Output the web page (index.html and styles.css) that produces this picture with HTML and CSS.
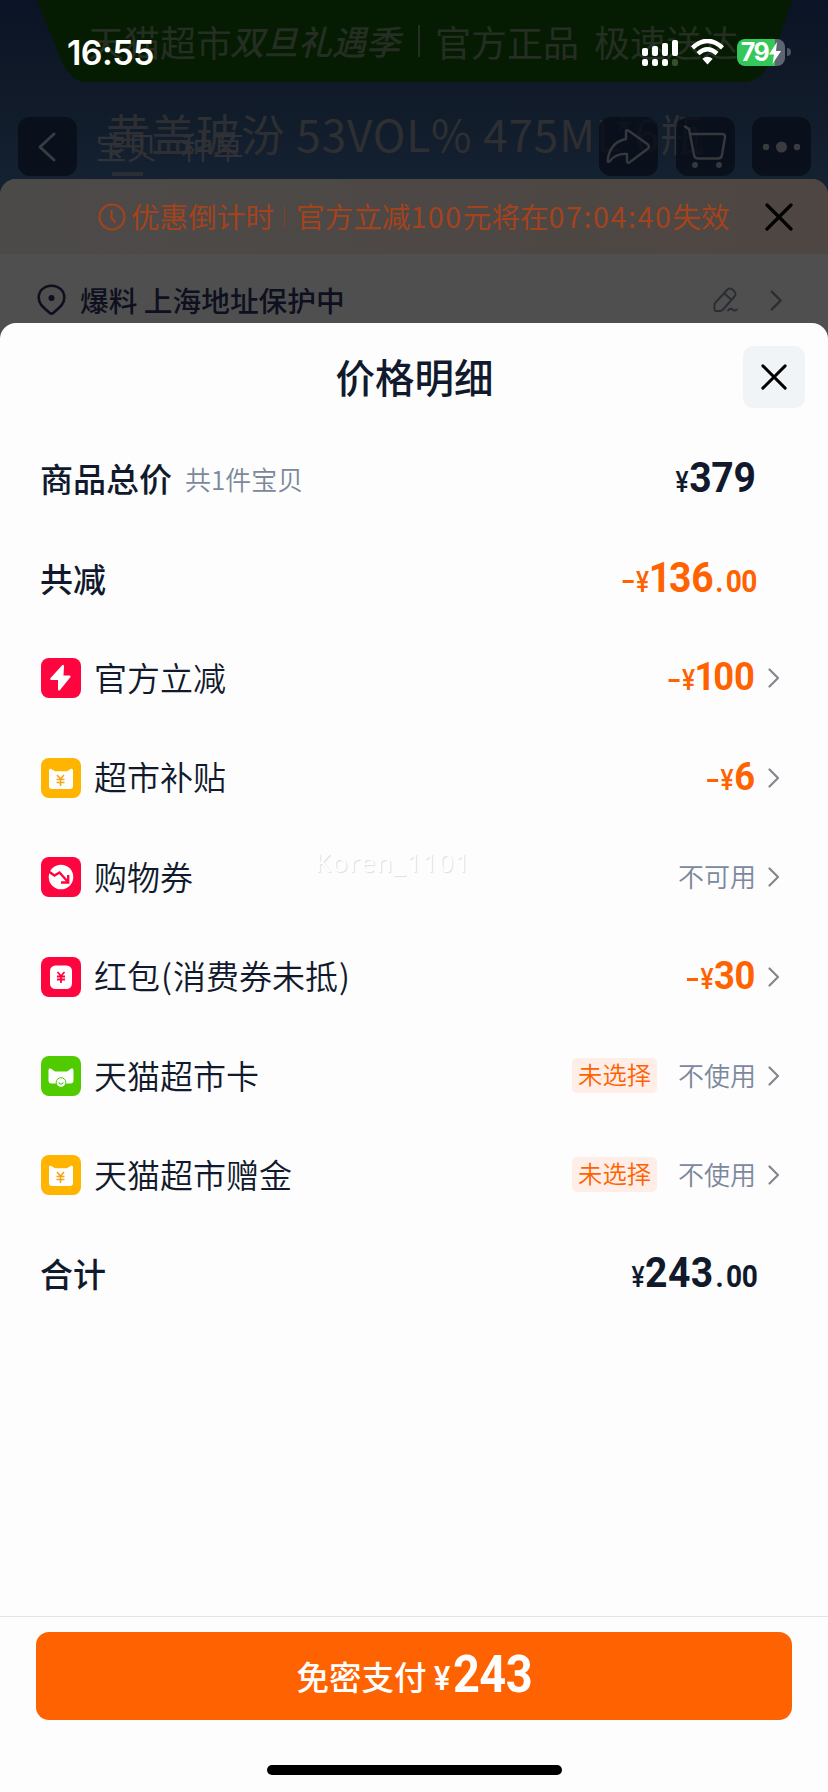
FILE: index.html
```html
<!DOCTYPE html>
<html lang="zh-CN">
<head>
<meta charset="utf-8">
<title>价格明细</title>
<link rel="stylesheet" href="styles.css">
</head>
<body>
<svg class="defs" width="0" height="0">
  <defs>
    <symbol id="chevron" viewBox="0 0 12 20"><path d="M1.5 1.5 10 10 1.5 18.500" fill="none" stroke="currentColor" stroke-width="2.200" stroke-linecap="round" stroke-linejoin="round"/></symbol>
    <symbol id="close" viewBox="0 0 28 28"><path d="M2 2 26 26M26 2 2 26" fill="none" stroke="currentColor" stroke-width="3.200" stroke-linecap="round"/></symbol>
    <symbol id="cat-yuan" viewBox="0 0 40 40">
      <rect width="40" height="40" rx="8" fill="#ffb400"/>
      <path d="M8 12.500Q8 10.200 10 10.800L14 13.200H26L30 10.800Q32 10.200 32 12.500V28Q32 31 29 31H11Q8 31 8 28Z" fill="#fff"/>
      <path d="M16 17l3.500 4 3.500-4M15.500 21.500h8M15.500 24.500h8M19.500 21v7" fill="none" stroke="#f5a51a" stroke-width="1.600"/>
    </symbol>
  </defs>
</svg>
<div class="page">
  <header class="hero">
    <div class="promo">
      <svg class="promo-shape" width="828" height="84" viewBox="0 0 828 84"><path d="M37 0H792L772 58Q763 82 742 82H86Q72 82 62 62Z" fill="#061c02"/></svg>
      <div class="promo-text"><span>天猫超市</span><em>双旦礼遇季</em><i class="promo-bar"></i><span>官方正品</span><span class="promo-last">极速送达</span></div>
    </div>
    <div class="product-title">黄盖玻汾 53VOL% 475ML*6瓶</div>
    <div class="title-next"></div>
    <nav class="nav">
      <span class="nav-btn"><svg width="59" height="59" viewBox="0 0 59 59"><path d="M36 17 22 30 36 43" fill="none" stroke="#393b3f" stroke-width="3"  stroke-linecap="round" stroke-linejoin="round"/></svg></span>
      <span class="nav-tabs"><b>宝贝</b><b>种草</b></span>
      <span class="nav-btn"><svg width="59" height="59" viewBox="0 0 59 59"><path d="M27 14.500Q27 12 30 14L49 27.500Q51 29.500 49 31.500L31 45Q28.500 47 28 44V37Q17 36 11 44Q8 47 9 41Q12 25 27 22Z" fill="none" stroke="#36383c" stroke-width="2.400" stroke-linejoin="round"/></svg></span>
      <span class="nav-btn"><svg width="59" height="59" viewBox="0 0 59 59"><path d="M9 9.500l4 2.500 5 26q.6 3.500 4 3.500h20q3.500 0 4-3.500l3-18q.5-3-3-3H15" fill="none" stroke="#36383c" stroke-width="2.400" stroke-linecap="round" stroke-linejoin="round"/><circle cx="19" cy="48" r="3" fill="#36383c"/><circle cx="43" cy="48" r="3" fill="#36383c"/></svg></span>
      <span class="nav-btn"><svg width="59" height="59" viewBox="0 0 59 59" fill="#393b3f"><circle cx="14" cy="30" r="3.200"/><circle cx="29.500" cy="30" r="5.500"/><circle cx="45" cy="30" r="3.200"/></svg></span>
    </nav>
    <div class="status">
      <span class="time">16:55</span>
      <svg class="signal" width="37" height="27" viewBox="0 0 37 27" fill="#fff"><rect x="0" y="8" width="6" height="8" rx="2"/><rect x="10" y="6" width="6" height="10" rx="2"/><rect x="20" y="3" width="6" height="13" rx="2"/><rect x="30" y="0" width="6" height="16" rx="2"/><rect x="0" y="19" width="6" height="7" rx="2.200"/><rect x="10" y="19" width="6" height="7" rx="2.200"/><rect x="20" y="19" width="6" height="7" rx="2.200"/><rect x="30" y="19" width="6" height="7" rx="2.200" fill="#34502f"/></svg>
      <svg class="wifi" width="35" height="26" viewBox="0 0 35 26"><path d="M2.500 8.800Q17.500-5 32.500 8.800" fill="none" stroke="#fff" stroke-width="4.400"/><path d="M8 14.600Q17.500 6 27 14.600" fill="none" stroke="#fff" stroke-width="4.200"/><path d="M12.300 19.700Q17.500 15.600 22.700 19.700L17.500 25.500Z" fill="#fff"/></svg>
      <span class="battery"><span class="level">79</span><svg width="12" height="22" viewBox="0 0 12 22"><path d="M8 0 0 12.500H5L3.500 22 12 9H7Z" fill="#fff"/></svg></span>
      <i class="battery-cap"></i>
    </div>
  </header>

  <section class="order">
    <div class="countdown">
      <svg class="clock" width="28" height="28" viewBox="0 0 28 28" fill="none" stroke="#a3431d" stroke-width="2.200" stroke-linecap="round" stroke-linejoin="round"><circle cx="14" cy="14" r="12.500"/><path d="M13.500 8v7l3.500 4"/></svg>
      <span class="cd-label">优惠倒计时</span><i class="cd-bar"></i><span class="cd-text">官方立减<span class="num">100</span>元将在<span class="num">07:04:40</span>失效</span>
      <svg class="cd-close" width="28" height="28"><use href="#close"/></svg>
    </div>
    <div class="address">
      <svg width="29" height="32" viewBox="0 0 29 32"><path d="M14.500 1.700C7 1.700 1.700 7 1.700 13.500C1.700 21 8 24.500 12.500 28.800Q14.500 30.500 16.500 28.800C21 24.500 27.300 21 27.300 13.500C27.300 7 22 1.700 14.500 1.700Z" fill="none" stroke="#0e1020" stroke-width="2.600"/><circle cx="14.500" cy="14" r="3" fill="#0e1020"/></svg>
      <span class="addr-text">爆料 上海地址保护中</span>
      <svg class="edit" width="25" height="26" viewBox="0 0 25 26" fill="none" stroke="#2b2d35" stroke-width="1.900" stroke-linecap="round" stroke-linejoin="round"><path d="M2 16 14.500 2.500Q17 .5 19.500 2.500L21.500 4.500Q23.500 7 21.500 9.500L10 22.500Q9 24 7 24H3Q1.500 24 1.500 22.500V18Q1.500 17 2 16ZM11.500 6.500 18 12.500M15 23.500q2.500-3 4.500-1t4.500 0"/></svg>
      <svg class="go" width="13" height="21"><use href="#chevron"/></svg>
    </div>
  </section>

  <main class="sheet">
    <div class="sheet-head"><h1>价格明细</h1><button class="close-btn" aria-label="关闭"><svg width="26" height="26"><use href="#close"/></svg></button></div>
    <div class="rows">
      <div class="row"><span class="label strong">商品总价</span><span class="sub">共1件宝贝</span><span class="price"><small>¥</small>379</span></div>
      <div class="row"><span class="label strong">共减</span><span class="price orange"><i class="minus"></i><small>¥</small><span class="one">1</span>36<small class="dec"><u>.</u>00</small></span></div>
      <div class="row">
        <svg class="icon" width="40" height="40" viewBox="0 0 40 40"><rect width="40" height="40" rx="8" fill="#ff0540"/><path d="M21 7.500 9.500 20Q8.500 21.500 10 22H17L17 31.500Q17.500 33.500 19 32L29.500 19Q30 17.500 28.500 17.500H22.500L23 8Q22.500 6 21 7.500Z" fill="#fff"/></svg>
        <span class="label">官方立减</span><span class="price orange mid"><i class="minus"></i><small>¥</small><span class="one">1</span>00</span><svg class="chev" width="12" height="20"><use href="#chevron"/></svg></div>
      <div class="row"><svg class="icon" width="40" height="40"><use href="#cat-yuan"/></svg><span class="label">超市补贴</span><span class="price orange mid"><i class="minus"></i><small>¥</small>6</span><svg class="chev" width="12" height="20"><use href="#chevron"/></svg></div>
      <div class="row">
        <svg class="icon" width="40" height="40" viewBox="0 0 40 40"><rect width="40" height="40" rx="8" fill="#ff0540"/><circle cx="20" cy="20" r="12.300" fill="#fff"/><path d="M7 14 13.500 18.500 18.500 15.500 27 25M27.200 18V25.500H20" fill="none" stroke="#ff0540" stroke-width="2.400"/></svg>
        <span class="label">购物券</span><span class="state">不可用</span><svg class="chev" width="12" height="20"><use href="#chevron"/></svg></div>
      <div class="row">
        <svg class="icon" width="40" height="40" viewBox="0 0 40 40"><rect width="40" height="40" rx="8" fill="#ff0540"/><rect x="9" y="8.500" width="22" height="23.500" rx="5.500" fill="#fff"/><path d="M16.500 15l3.500 4 3.500-4M16 19.500h8M16 22.500h8M20 19v7" fill="none" stroke="#ff0540" stroke-width="1.800"/></svg>
        <span class="label">红包<span class="paren">(</span>消费券未抵<span class="paren">)</span></span><span class="price orange mid"><i class="minus"></i><small>¥</small>30</span><svg class="chev" width="12" height="20"><use href="#chevron"/></svg></div>
      <div class="row">
        <svg class="icon" width="40" height="40" viewBox="0 0 40 40"><rect width="40" height="40" rx="8" fill="#4fcb00"/><path d="M7.500 15Q7.500 11 10.500 13L14 15.500H26L29.500 13Q32.500 11 32.500 15V24.500Q32.500 27.500 29.500 27.500H10.500Q7.500 27.500 7.500 24.500Z" fill="#fff"/><circle cx="20" cy="26.500" r="4.800" fill="#fff" stroke="#4fcb00" stroke-width="1"/><path d="M17.700 26.500q2.300 3.500 4.600 0" fill="none" stroke="#4fcb00" stroke-width="1.200"/></svg>
        <span class="label">天猫超市卡</span><span class="tag">未选择</span><span class="state">不使用</span><svg class="chev" width="12" height="20"><use href="#chevron"/></svg></div>
      <div class="row"><svg class="icon" width="40" height="40"><use href="#cat-yuan"/></svg><span class="label">天猫超市赠金</span><span class="tag">未选择</span><span class="state">不使用</span><svg class="chev" width="12" height="20"><use href="#chevron"/></svg></div>
      <div class="row"><span class="label strong">合计</span><span class="price total"><small>¥</small>243<small class="dec"><u>.</u>00</small></span></div>
    </div>
    <footer class="footer">
      <button class="pay"><span class="pay-label">免密支付</span><span class="pay-yen">¥</span><span class="pay-num">243</span></button>
      <div class="home"></div>
    </footer>
    <div class="watermark">Koren_1101</div>
  </main>
</div>
</body>
</html>
```
FILE: styles.css
```css
* { box-sizing: border-box; }
body { margin: 0; font-family: "Noto Sans CJK SC", sans-serif; color: #111a2c; }
.defs { position: absolute; }
svg { display: block; flex: none; }
i, em { font-style: normal; }
button { border: 0; padding: 0; font: inherit; }

.page {
  width: 828px; height: 1792px; overflow: hidden;
  display: flex; flex-direction: column;
  background: linear-gradient(180deg, #0b1426 0, #101a28 90px, #152333 200px);
}

/* dimmed product page */
.hero { display: grid; height: 179px; flex: none; overflow: hidden; }
.hero > * { grid-area: 1 / 1; }
.promo { display: grid; align-content: start; }
.promo > * { grid-area: 1 / 1; }
.promo-text {
  display: flex; align-items: center; height: 82px; padding-left: 88px;
  font-size: 36px; line-height: 82px; font-weight: 400; color: #252e23; white-space: nowrap;
}
.promo-text em { font-style: italic; font-weight: 500; font-size: 34px; margin-left: -2px; }
.promo-bar { width: 2px; height: 32px; margin: 0 15px 0 18px; background: #252e23; }
.promo-last { margin-left: 15px; }
.product-title { padding: 99px 0 0 106px; font-size: 44px; line-height: 68px; letter-spacing: .9px; color: #2e2f32; white-space: nowrap; font-weight: 400; }
.title-next { width: 31px; height: 4px; margin: 172px 0 0 112px; background: #2b2f35; }
.nav { display: flex; align-items: flex-start; padding: 117px 17px 0 18px; gap: 17.5px; }
.nav-btn { width: 59px; height: 59px; border-radius: 12px; background: rgba(7, 13, 24, .8); flex: none; }
.nav-tabs { flex: 1; display: flex; gap: 24px; font-size: 31px; line-height: 57px; color: #303237; padding-left: 1px; }
.nav-tabs b { font-weight: 400; }
.status { display: flex; align-items: flex-start; padding: 39px 37px 0 67px; color: #fff; }
.time { flex: 1; font: 600 34px/28px Inter, sans-serif; letter-spacing: -.6px; }
.signal { margin-right: 11px; margin-top: 1px; }
.wifi { margin-right: 12px; }
.battery {
  display: flex; align-items: center; justify-content: center; gap: 1px; width: 48px; height: 27px;
  border-radius: 8px; background: linear-gradient(90deg, #34c759 80%, #5d6570 80%);
  font: 700 25px/27px Inter, sans-serif; letter-spacing: -1.5px;
}
.battery-cap { width: 4px; height: 8px; margin: 9px 0 0 2px; border-radius: 0 4px 4px 0; background: #4d5560; }

.order { flex: none; height: 168px; border-radius: 16px 16px 0 0; background: #4f4f4f; overflow: hidden; }
.countdown { display: flex; align-items: center; height: 75px; padding: 0 35px 0 98px; background: linear-gradient(90deg, #4c4a49, #4e4642); color: #a3431d; font-size: 28.6px; line-height: 73px; white-space: nowrap; }
.cd-label { margin: -2px 0 0 5px; }
.cd-text { margin-top: -2px; }
.cd-bar { width: 1px; height: 22px; margin: 0 11px 0 10px; background: #87401f; }
.num { letter-spacing: 1.6px; }
.cd-close { margin-left: auto; color: #000; }
.address { display: flex; align-items: center; height: 92px; padding: 0 45px 0 37px; }
.addr-text { flex: 1; margin: -2px 0 0 14px; font-size: 28.7px; font-weight: 500; color: #0e1020; }
.edit { margin-right: 32px; }
.go { color: #2b2d30; }

/* price sheet */
.sheet { position: relative; flex: 1; margin-top: -24px; display: flex; flex-direction: column; border-radius: 16px 16px 0 0; background: #fdfdfd; }
.sheet-head { display: grid; grid-template-columns: 1fr 62px; align-items: center; height: 107px; padding: 0 23px; }
.sheet-head h1 { margin: -2px 0 0; padding-left: 63px; text-align: center; font-size: 39.5px; line-height: 60px; font-weight: 500; }
.close-btn { display: grid; place-items: center; width: 62px; height: 62px; border-radius: 10px; background: #f0f4f7; color: #000; }
.rows { display: flex; flex-direction: column; }
.row { display: flex; align-items: center; height: 99.4px; padding: 0 73px 0 41px; }
.icon { margin-right: 13px; }
.label { margin-top: -3px; font-size: 33px; line-height: 50px; font-weight: 350; white-space: nowrap; }
.label.strong { font-weight: 500; margin-left: -1px; }
.paren { margin: 0 1px; }
.sub { margin: -1px 0 0 13px; font-size: 26px; line-height: 50px; font-weight: 350; color: #7c889c; }
.price { margin: 1px -1px 0 auto; display: flex; align-items: baseline; font: 700 42.500px/50px Roboto, sans-serif; letter-spacing: -.3px; transform: scaleX(.92); transform-origin: right; }
.price.mid { font-size: 39.500px; }
.price.total { letter-spacing: .5px; }
.price small { font-size: 31px; letter-spacing: 0; font-weight: 500; }
.price small:first-of-type { font-size: 29px; transform: scaleX(.92); }
.price .dec:last-child { font-weight: 700; letter-spacing: -.5px; margin: 0 -1px 0 2px; font-size: 30.500px; transform: none; }
.dec u { text-decoration: none; margin-right: 3px; }
.one { margin: 0 -2px 0 -1px; }
.orange { color: #ff6200; }
.minus { width: 12px; height: 3px; margin: 4px 2px 0 0; background: currentColor; align-self: center; }
.state { margin: -2px -1px 0 auto; font-size: 26px; line-height: 50px; font-weight: 350; color: #7c889c; }
.tag { margin: -2px 0 0 auto; height: 35px; padding: 0 6px; border-radius: 5px; background: #ffeee8; color: #ff6200; font-size: 24.300px; line-height: 32px; font-weight: 350; }
.tag + .state { margin-left: 21px; }
.chev { margin: 0 -25px 0 13px; color: #85878c; }
.price + .chev { margin-left: 14px; }
.footer { margin-top: auto; height: 176px; border-top: 1px solid #e4e4e4; padding: 15px 36px 0 36px; display: flex; flex-direction: column; align-items: center; }
.pay { display: flex; align-items: baseline; justify-content: center; width: 100%; height: 88px; border-radius: 13px; background: #ff6200; color: #fff; white-space: nowrap; }
.pay-label { font-size: 32.5px; line-height: 88px; font-weight: 500; }
.pay-yen { font: 500 34px/60px Roboto, sans-serif; margin: 0 1px 0 7px; transform: scaleX(.9); }
.pay-num { font: 700 51px/60px Roboto, sans-serif; letter-spacing: -.6px; transform: translateY(2px) scaleX(.92); transform-origin: left; margin-right: -7px; }
.home { width: 295px; height: 10px; margin-top: 45px; border-radius: 5px; background: #000; }
.watermark { position: absolute; left: 315px; top: 521px; font: 400 25.5px/36px "Noto Sans", sans-serif; letter-spacing: 1.5px; color: #fff; text-shadow: 1px 1px 1px #ddd; }
```
